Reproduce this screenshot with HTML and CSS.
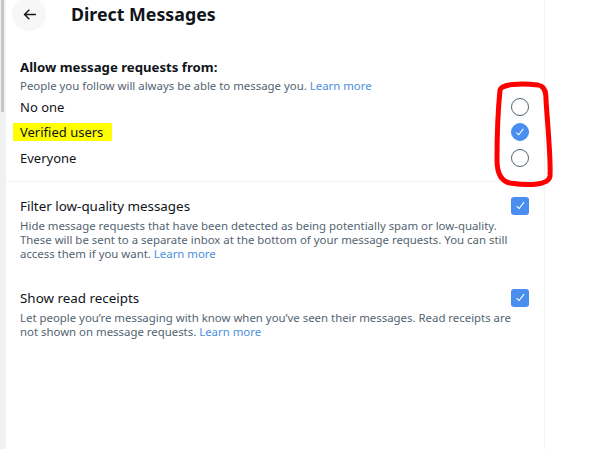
FILE: index.html
```html
<!DOCTYPE html>
<html>
<head>
<meta charset="utf-8">
<link rel="stylesheet" href="styles.css">
</head>
<body>
<div class="page">
  <div class="scrollbar"><div class="thumb"></div></div>
  <main class="main">
    <header class="header">
      <div class="back">
        <svg viewBox="0 0 24 24" width="17" height="17"><path d="M7.414 13l5.043 5.04-1.414 1.42L3.586 12l7.457-7.46 1.414 1.42L7.414 11H21v2H7.414z" fill="#0f1419"/></svg>
      </div>
      <h1 class="title">Direct Messages</h1>
    </header>

    <section class="allow">
      <h2 class="allow-title">Allow message requests from:</h2>
      <p class="sub">People you follow will always be able to message you. <a class="link">Learn more</a></p>
      <div class="option"><span class="opt-label">No one</span><span class="radio"></span></div>
      <div class="option"><span class="opt-label hl">Verified users</span><span class="radio checked"><svg viewBox="0 0 24 24" width="12" height="12"><path d="M9.64 18.952l-5.55-4.861 1.317-1.504 3.951 3.459 8.459-10.948L19.4 6.32 9.64 18.952z" fill="#fff"/></svg></span></div>
      <div class="option"><span class="opt-label">Everyone</span><span class="radio"></span></div>
    </section>

    <section class="setting first">
      <div class="setting-head"><span class="setting-title">Filter low-quality messages</span><span class="check"><svg viewBox="0 0 24 24" width="13" height="13"><path d="M9.64 18.952l-5.55-4.861 1.317-1.504 3.951 3.459 8.459-10.948L19.4 6.32 9.64 18.952z" fill="#fff"/></svg></span></div>
      <p class="desc">Hide message requests that have been detected as being potentially spam or low-quality. These will be sent to a separate inbox at the bottom of your message requests. You can still access them if you want. <a class="link">Learn more</a></p>
    </section>

    <section class="setting second">
      <div class="setting-head"><span class="setting-title">Show read receipts</span><span class="check"><svg viewBox="0 0 24 24" width="13" height="13"><path d="M9.64 18.952l-5.55-4.861 1.317-1.504 3.951 3.459 8.459-10.948L19.4 6.32 9.64 18.952z" fill="#fff"/></svg></span></div>
      <p class="desc">Let people you’re messaging with know when you’ve seen their messages. Read receipts are not shown on message requests. <a class="link">Learn more</a></p>
    </section>
  </main>
  <svg class="annotation" width="70" height="120" viewBox="490 76 70 120">
    <path d="M500 90 C 502 84, 520 83, 538 85 M 541 86 C 545 88, 546 92, 546 100 C 548 130, 551 160, 550 176 C 549 185, 530 186, 510 183 C 500 181, 497 172, 497 160 C 497 140, 498 110, 500 90" fill="none" stroke="#ff0000" stroke-width="5" stroke-linecap="round" stroke-linejoin="round"/>
  </svg>
</div>
</body>
</html>
```

FILE: styles.css
```css
html, body {
  margin: 0;
  padding: 0;
  background: #ffffff;
  overflow: hidden;
}
body {
  width: 591px;
  height: 449px;
  font-family: "Noto Sans", "Open Sans", sans-serif;
  color: #0f1419;
}
.page {
  position: relative;
  display: flex;
  height: 449px;
}
.scrollbar {
  width: 6px;
  flex: 0 0 6px;
  background: #f1f1f1;
}
.thumb {
  width: 3px;
  margin-left: 1px;
  height: 112px;
  background: #c6c6c6;
}
.main {
  width: 539px;
  flex: 0 0 539px;
  border-right: 1px solid #eff3f4;
  box-sizing: border-box;
}
.header {
  display: flex;
  align-items: center;
  height: 34px;
  margin-top: -3px;
  padding-left: 6px;
}
.back {
  width: 34px;
  height: 34px;
  border-radius: 50%;
  background: #f7f7f7;
  display: flex;
  align-items: center;
  justify-content: center;
}
.title {
  margin: 0 0 0 25px;
  font-size: 17.8px;
  font-weight: 700;
  line-height: 24px;
}
.allow {
  padding: 26px 15px 0 14px;
}
.allow-title {
  margin: 0;
  font-size: 13.2px;
  font-weight: 700;
  line-height: 20px;
}
.sub {
  margin: 1px 0 0;
  font-size: 11.4px;
  line-height: 16px;
  color: #536471;
}
.link {
  color: #4a8fe0;
}
.option {
  display: flex;
  align-items: center;
  justify-content: space-between;
  height: 25.5px;
  font-size: 13px;
}
.opt-label {
  line-height: 18px;
}
.hl {
  background: #ffff00;
  margin-left: -7px;
  padding: 0 9px 0 7px;
}
.radio {
  width: 16px;
  height: 16px;
  border: 1.3px solid #536471;
  border-radius: 50%;
  display: flex;
  align-items: center;
  justify-content: center;
  flex: 0 0 auto;
}
.radio.checked {
  background: #4a8ef0;
  border-color: #4a8ef0;
}
.setting {
  padding: 0 15px 0 14px;
}
.setting.first {
  border-top: 1px solid #eff3f4;
  margin-top: 10px;
  padding-top: 14px;
}
.setting.second {
  padding-top: 27px;
}
.setting-head {
  display: flex;
  align-items: center;
  justify-content: space-between;
  height: 20px;
}
.setting-title {
  font-size: 13.4px;
  line-height: 20px;
}
.check {
  width: 18px;
  height: 18px;
  border-radius: 3px;
  background: #4a8ef0;
  display: flex;
  align-items: center;
  justify-content: center;
}
.desc {
  margin: 3px 0 0;
  font-size: 11.4px;
  line-height: 14px;
  color: #536471;
  padding-right: 10px;
}
.annotation {
  position: absolute;
  left: 490px;
  top: 76px;
}
```
